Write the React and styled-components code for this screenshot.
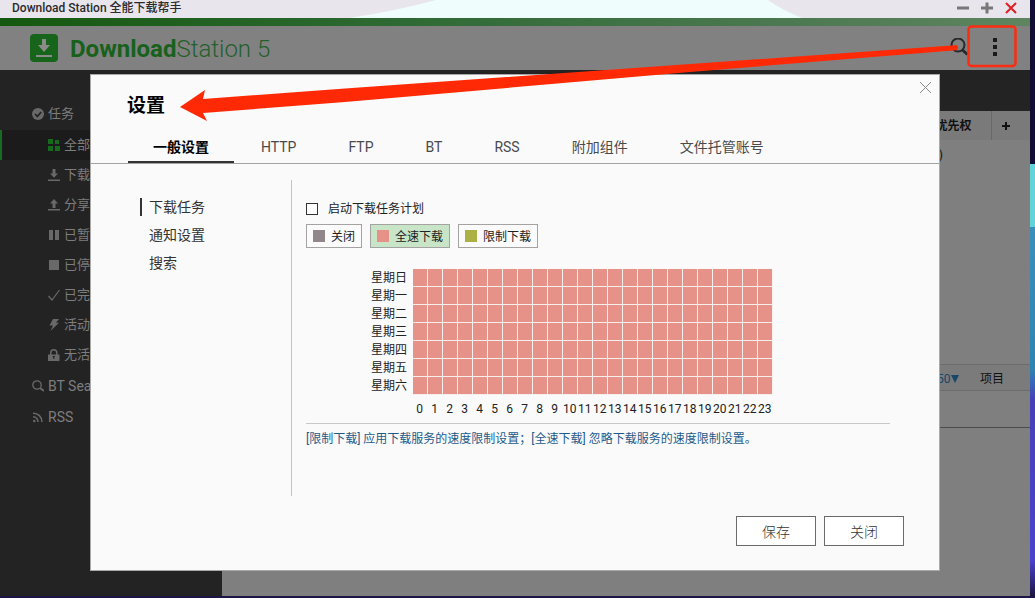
import React from "react";
import styled, { createGlobalStyle } from "styled-components";

const GlobalStyle = createGlobalStyle`
  *, *::before, *::after { box-sizing: border-box; }
  body {
    margin: 0;
    font-family: Roboto, "Noto Sans CJK SC", sans-serif;
    font-size: 14px;
    color: #222;
  }
  button, input, select { font: inherit; color: inherit; }
`;

/* ---------- desktop and window ---------- */

const Desktop = styled.div`
  min-height: 100vh;
  padding: 0 5px 2px 0;
  background: linear-gradient(
    #120d33 0 164px, #62d3d8 164px 227px, #3a8fbd 227px, #2f83b4 370px,
    #4540b8 400px, #4a43d0 560px, #1d1545 596px
  );
`;

const Window = styled.div`
  position: relative;
  display: flex;
  flex-direction: column;
  min-height: calc(100vh - 2px);
  background: #7f7f7f;
  overflow: hidden;
`;

const TitleBar = styled.div`
  position: relative;
  display: flex;
  align-items: center;
  justify-content: space-between;
  height: 18px;
  padding: 0 13px 2px 12px;
  background: #e8e6ec;
  font-size: 12px;
  font-weight: 500;
  line-height: 16px;
  color: #2b2b2e;
`;

const Wallpaper = styled.svg`
  position: absolute;
  inset: 0;
  width: 100%;
  height: 100%;
`;

const WindowTitle = styled.span`
  position: relative;
`;

const WindowControls = styled.div`
  position: relative;
  display: flex;
  gap: 12px;
`;

const IconButton = styled.button`
  display: flex;
  align-items: center;
  justify-content: center;
  width: ${(p) => p.$size}px;
  height: ${(p) => p.$size}px;
  padding: 0;
  border: 0;
  background: none;
`;

const Accent = styled.div`
  height: 8px;
  background: linear-gradient(90deg, #14580f, #2f6a34 40%, #4b7850 75%, #5e8560);
`;

const Header = styled.header`
  display: flex;
  align-items: center;
  justify-content: space-between;
  height: 44px;
  padding: 0 21px 0 30px;
  background: #828182;
`;

const Brand = styled.div`
  display: flex;
  align-items: center;
  gap: 12px;
  font-size: 24px;
  font-weight: 300;
  line-height: 28px;
  color: #24602a;
  span { padding-top: 2px; }
  b { font-weight: 700; color: #17611c; }
`;

const HeaderTools = styled.div`
  display: flex;
  align-items: center;
  gap: 12px;
`;

const Body = styled.div`
  flex: 1;
  display: flex;
`;

/* ---------- sidebar ---------- */

const Sidebar = styled.nav`
  width: 222px;
  padding-top: 29px;
  background: #232323;
`;

const SideList = styled.ul`
  margin: 0 0 1px;
  padding: 0;
  list-style: none;
`;

const SideLink = styled.a`
  display: flex;
  align-items: center;
  gap: 4px;
  height: 30px;
  padding-left: ${(p) => (p.$nested ? 46 : 30)}px;
  border-left: 2px solid ${(p) => (p.$active ? "#176b22" : "transparent")};
  background: ${(p) => (p.$active ? "#1b1b1b" : "none")};
  font-size: ${(p) => (p.$latin ? 14 : 13)}px;
  line-height: 20px;
  color: #7d7d7d;
  text-decoration: none;
  white-space: nowrap;
`;

/* ---------- task list behind the dialog ---------- */

const Main = styled.main`
  flex: 1;
  display: flex;
  flex-direction: column;
`;

const Toolbar = styled.div`
  height: 41px;
  background: #232323;
`;

const TaskPane = styled.div`
  height: 253px;
`;

const TaskTable = styled.table`
  width: 100%;
  border-collapse: collapse;
  font-size: 12px;
  line-height: 18px;
  color: #111;
  th {
    height: 29px;
    padding: 0 19px 0 0;
    background: #7a7a7a;
    font-weight: 700;
    text-align: right;
  }
  th + th {
    width: 39px;
    padding: 0 0 0 6px;
    border-left: 1px solid #686868;
  }
  td {
    height: 30px;
    padding: 0 48px 0 0;
    text-align: right;
  }
  td + td { padding: 0; }
`;

const Pager = styled.div`
  display: flex;
  align-items: center;
  justify-content: flex-end;
  height: 27px;
  padding: 2px 26px 0 0;
  border-top: 1px solid #6c6c6c;
  border-bottom: 1px solid #6c6c6c;
  background: #7b7b7b;
  font-size: 12px;
  line-height: 18px;
  color: #111;
`;

const PageSize = styled.select`
  appearance: none;
  width: 14px;
  padding: 0;
  border: 0;
  background: none;
  color: #17476b;
`;

const Caret = styled.svg`
  margin-right: 21px;
`;

const DetailPane = styled.div`
  height: 37px;
  border-bottom: 1px solid #4c4c4c;
`;

/* ---------- settings dialog ---------- */

const Dialog = styled.section`
  position: absolute;
  top: 74px;
  left: 90px;
  right: 90px;
  border: 1px solid #a9a9a9;
  background: #fafafa;
`;

const DialogHead = styled.div`
  display: flex;
  align-items: flex-start;
  justify-content: space-between;
  height: 56px;
  padding: 0 5px 0 36px;
`;

const DialogTitle = styled.h1`
  margin: 16px 0 0;
  font-size: 19px;
  font-weight: 700;
  line-height: 30px;
  color: #000;
`;

const Tabs = styled.div`
  display: flex;
  gap: 2px;
  height: 33px;
  padding-left: 37px;
  border-bottom: 1px solid #a3a3a3;
`;

const Tab = styled.button`
  height: 32px;
  padding: 2px 25px 0;
  border: 0;
  border-bottom: 2px solid ${(p) => (p.$active ? "#333" : "transparent")};
  background: none;
  font-weight: ${(p) => (p.$active ? 700 : 400)};
  line-height: 20px;
  color: ${(p) => (p.$active ? "#000" : "#4a4a4a")};
  white-space: nowrap;
`;

const DialogBody = styled.div`
  display: flex;
  min-height: 316px;
  margin: 16px 49px 0;
`;

const SectionNav = styled.nav`
  width: 152px;
  padding-top: 13px;
  border-right: 1px solid #c4c4c4;
`;

const SectionLink = styled.a`
  display: block;
  height: 18px;
  margin: 5px 0 10px;
  padding-left: 7px;
  border-left: 2px solid ${(p) => (p.$active ? "#333" : "transparent")};
  line-height: 18px;
  color: #333;
  text-decoration: none;
`;

const Panel = styled.div`
  flex: 1;
  padding: 19px 0 0 14px;
  font-size: 12px;
`;

const CheckLabel = styled.label`
  display: flex;
  align-items: center;
  gap: 10px;
  line-height: 20px;
`;

const Checkbox = styled.input`
  appearance: none;
  width: 12px;
  height: 12px;
  margin: 0;
  border: 1px solid #333;
  background: #fff;
`;

const Modes = styled.div`
  display: flex;
  gap: 8px;
  margin-top: 5px;
`;

const Mode = styled.button`
  display: flex;
  align-items: center;
  gap: 6px;
  height: 24px;
  padding: 0 6px;
  border: 1px solid #a5a2a2;
  background: ${(p) => (p.$active ? "#c8e6c7" : "#fbfbfb")};
  line-height: 20px;
  white-space: nowrap;
  span { padding-top: 2px; }
  &::before {
    content: "";
    width: 12px;
    height: 12px;
    background: ${(p) => p.$color};
  }
`;

const Schedule = styled.table`
  margin: 21px 0 0 65px;
  border-collapse: separate;
  border-spacing: 0;
  table-layout: fixed;
  width: 402px;
  line-height: 17px;
  th { padding: 0; font-weight: 400; text-align: left; white-space: nowrap; }
  th:first-child { width: 42px; }
  tfoot td { height: 28px; padding: 0 2px 0 0; text-align: center; }
`;

const Slot = styled.td`
  height: 18px;
  padding: 0;
  border: solid #f6f0ec;
  border-width: 0 1px 1px 0;
  background: #e69289;
`;

const Note = styled.p`
  margin: 0;
  padding-top: 5px;
  border-top: 1px solid #c8c8c8;
  line-height: 20px;
  color: #1f5b8a;
`;

const DialogFoot = styled.div`
  display: flex;
  justify-content: flex-end;
  gap: 8px;
  padding: 20px 35px 24px;
`;

const FootButton = styled.button`
  width: 80px;
  height: 30px;
  padding: 2px 0 0;
  border: 1px solid #6a6a6a;
  background: #fff;
  font-weight: 300;
  line-height: 20px;
  color: #333;
`;

const Annotation = styled.svg`
  position: absolute;
  top: 0;
  right: 0;
  pointer-events: none;
`;

/* ---------- icons ---------- */

const glyphs = {
  done: (
    <>
      <circle cx="6" cy="6" r="6" fill="currentColor" />
      <path d="M3 6l2.4 2.4L9.2 4" fill="none" stroke="#232323" strokeWidth="1.7" />
    </>
  ),
  all: <path d="M0 0h5v5H0zM7 1h4v4H7zM0 7h5v5H0zM7 7h5v5H7z" fill="#146a1d" />,
  down: <path d="M4.500 0h3v4.500H10L6 8.700 2 4.500h2.500zM0 10.500h12V12H0z" fill="currentColor" />,
  up: <path d="M6 0l4 4.500H7.500V9h-3V4.500H2zM0 10h12v1.500H0z" fill="currentColor" />,
  pause: <path d="M1 1h4v10H1zM7 1h4v10H7z" fill="currentColor" />,
  stop: <path d="M1 1h10v10H1z" fill="currentColor" />,
  check: <path d="M.5 7L4 11 11.500 1" fill="none" stroke="currentColor" strokeWidth="1.200" />,
  bolt: <path d="M5 0h6L8 3.800h3L2.500 12 5 6.500H1.500z" fill="currentColor" />,
  lock: (
    <>
      <path d="M2.800 6V3.800a3 3 0 0 1 6 0V6" fill="none" stroke="currentColor" strokeWidth="1.500" />
      <path d="M0 5.500h11.500V12H0z" fill="currentColor" />
      <path d="M4.700 7.500h2.200M5.800 7.500V10" stroke="#232323" strokeWidth="1" />
    </>
  ),
  search: (
    <>
      <circle cx="5" cy="5" r="4.200" fill="none" stroke="currentColor" strokeWidth="1.300" />
      <path d="M8 8l4 3" stroke="currentColor" strokeWidth="2" />
    </>
  ),
  rss: (
    <g fill="none" stroke="currentColor" strokeWidth="1.500">
      <circle cx="2.300" cy="10" r="1.300" fill="currentColor" stroke="none" />
      <path d="M1 5.700a5 5 0 0 1 5 5.300M1 2.200A8.600 8.600 0 0 1 10 11" />
    </g>
  ),
};

const Glyph = ({ name }) => (
  <svg width="12" height="12" viewBox="0 0 12 12" color="#696969" aria-hidden="true">
    {glyphs[name]}
  </svg>
);

const filters = [
  ["all", "全部"],
  ["down", "下载"],
  ["up", "分享"],
  ["pause", "已暂停"],
  ["stop", "已停止"],
  ["check", "已完成"],
  ["bolt", "活动"],
  ["lock", "无活动"],
];
const tabs = ["一般设置", "HTTP", "FTP", "BT", "RSS", "附加组件", "文件托管账号"];
const sections = ["下载任务", "通知设置", "搜索"];
const days = ["日", "一", "二", "三", "四", "五", "六"];
const hours = Array.from({ length: 24 }, (_, i) => i);

export default function App() {
  return (
    <Desktop>
      <GlobalStyle />
      <Window>
        <TitleBar>
          <Wallpaper viewBox="0 0 1030 18" preserveAspectRatio="none" aria-hidden="true">
            <path d="M436 0H768Q782 10 802 18H350Q400 10 436 0z" fill="#effefd" />
          </Wallpaper>
          <WindowTitle>Download Station 全能下载帮手</WindowTitle>
          <WindowControls>
            <IconButton $size={12} aria-label="最小化">
              <svg width="12" height="12"><path d="M0 6h12" stroke="#77777a" strokeWidth="3" /></svg>
            </IconButton>
            <IconButton $size={12} aria-label="最大化">
              <svg width="12" height="12"><path d="M0 6h12M6 .5v11" stroke="#77777a" strokeWidth="3" /></svg>
            </IconButton>
            <IconButton $size={12} aria-label="关闭窗口">
              <svg width="12" height="12"><path d="M1 1l10 10M11 1L1 11" stroke="#e01e26" strokeWidth="2" /></svg>
            </IconButton>
          </WindowControls>
        </TitleBar>
        <Accent />
        <Header>
          <Brand>
            <svg width="28" height="28" viewBox="0 0 28 28" aria-hidden="true">
              <rect width="28" height="28" rx="4" fill="#17651b" />
              <path d="M12 5h4v6h4l-6 7-6-7h4zM6 21h16v2H6z" fill="#8b8b8b" />
            </svg>
            <span><b>Download</b>Station 5</span>
          </Brand>
          <HeaderTools>
            <IconButton $size={20} aria-label="搜索">
              <svg width="20" height="20" viewBox="0 0 20 20">
                <circle cx="9" cy="7" r="6.500" fill="none" stroke="#29292b" strokeWidth="2" />
                <path d="M13.500 12l5 4.500" stroke="#29292b" strokeWidth="3" />
              </svg>
            </IconButton>
            <IconButton $size={28} aria-label="更多">
              <svg width="28" height="28" viewBox="0 0 28 28">
                <path d="M12 4h4v4h-4zM12 11h4v4h-4zM12 18h4v4h-4z" fill="#1a1a1a" />
              </svg>
            </IconButton>
          </HeaderTools>
        </Header>
        <Body>
          <Sidebar>
            <SideList>
              <li><SideLink href="#tasks"><Glyph name="done" />任务</SideLink></li>
            </SideList>
            <SideList>
              {filters.map(([name, label], i) => (
                <li key={name}>
                  <SideLink href={`#${name}`} $nested $active={i === 0}>
                    <Glyph name={name} />{label}
                  </SideLink>
                </li>
              ))}
            </SideList>
            <SideList>
              <li><SideLink href="#search" $latin><Glyph name="search" />BT Search</SideLink></li>
            </SideList>
            <SideList>
              <li><SideLink href="#rss" $latin><Glyph name="rss" />RSS</SideLink></li>
            </SideList>
          </Sidebar>
          <Main>
            <Toolbar />
            <TaskPane>
              <TaskTable>
                <thead>
                  <tr>
                    <th>优先权</th>
                    <th>
                      <IconButton $size={16} aria-label="添加列">
                        <svg width="16" height="16"><path d="M4 8h8M8 4v8" stroke="#111" strokeWidth="2" /></svg>
                      </IconButton>
                    </th>
                  </tr>
                </thead>
                <tbody><tr><td>(0)</td><td /></tr></tbody>
              </TaskTable>
            </TaskPane>
            <Pager>
              <PageSize aria-label="每页项目"><option>50</option></PageSize>
              <Caret width="8" height="8" aria-hidden="true"><path d="M0 0h8L4 8z" fill="#17476b" /></Caret>
              项目
            </Pager>
            <DetailPane />
          </Main>
        </Body>

        <Dialog role="dialog" aria-labelledby="settings-title">
          <DialogHead>
            <DialogTitle id="settings-title">设置</DialogTitle>
            <IconButton $size={24} aria-label="关闭设置">
              <svg width="24" height="24" viewBox="0 0 24 24">
                <path d="M10 7l11 11M21 7L10 18" stroke="#888" strokeWidth="1" />
              </svg>
            </IconButton>
          </DialogHead>
          <Tabs role="tablist">
            {tabs.map((t, i) => (
              <Tab key={t} role="tab" aria-selected={i === 0} $active={i === 0}>{t}</Tab>
            ))}
          </Tabs>
          <DialogBody>
            <SectionNav>
              {sections.map((s, i) => (
                <SectionLink key={s} href={`#section-${i}`} $active={i === 0}>{s}</SectionLink>
              ))}
            </SectionNav>
            <Panel>
              <CheckLabel><Checkbox type="checkbox" />启动下载任务计划</CheckLabel>
              <Modes>
                <Mode $color="#8f878a"><span>关闭</span></Mode>
                <Mode $color="#e69289" $active><span>全速下载</span></Mode>
                <Mode $color="#adb043"><span>限制下载</span></Mode>
              </Modes>
              <Schedule>
                <tbody>
                  {days.map((d) => (
                    <tr key={d}>
                      <th scope="row">星期{d}</th>
                      {hours.map((h) => <Slot key={h} />)}
                    </tr>
                  ))}
                </tbody>
                <tfoot>
                  <tr>
                    <td />
                    {hours.map((h) => <td key={h}>{h}</td>)}
                  </tr>
                </tfoot>
              </Schedule>
              <Note>[限制下载] 应用下载服务的速度限制设置；[全速下载] 忽略下载服务的速度限制设置。</Note>
            </Panel>
          </DialogBody>
          <DialogFoot>
            <FootButton>保存</FootButton>
            <FootButton>关闭</FootButton>
          </DialogFoot>
        </Dialog>

        <Annotation width="860" height="130" viewBox="170 0 860 130" aria-hidden="true">
          <path
            d="M180 107L205 90L203 99L345 88.500L690 64L955 45.200A2.500 2.500 0 0 1 956 50.200L690 72L345 102L203 113L207 121z"
            fill="#ff2a05"
          />
          <rect x="968.500" y="26.500" width="47" height="39.500" rx="3" fill="none" stroke="#fb2d10" strokeWidth="2.500" />
        </Annotation>
      </Window>
    </Desktop>
  );
}
